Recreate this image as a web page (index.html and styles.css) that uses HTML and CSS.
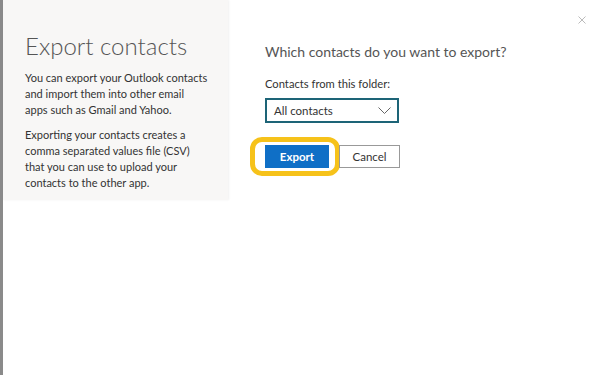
FILE: index.html
```html
<!DOCTYPE html>
<html lang="en">
<head>
  <meta charset="UTF-8" />
  <title>Export contacts</title>
  <link rel="stylesheet" href="styles.css">
</head>
<body>
  <div class="dialog">
    <!-- Info panel -->
    <aside class="side">
      <h1>Export contacts</h1>
      <p>You can export your Outlook contacts and import them into other email apps such as Gmail and Yahoo.</p>
      <p>Exporting your contacts creates a comma separated values file (CSV) that you can use to upload your contacts to the other app.</p>
    </aside>

    <!-- Form -->
    <main class="content">
      <h2>Which contacts do you want to export?</h2>
      <label class="field-label">Contacts from this folder:</label>
      <div class="select">
        <span>All contacts</span>
        <svg width="13" height="8" viewBox="0 0 13 8"><path d="M0.5 0.5 L6.5 6.5 L12.5 0.5" fill="none" stroke="#666" stroke-width="1"/></svg>
      </div>
      <div class="actions">
        <div class="highlight">
          <button class="btn primary">Export</button>
        </div>
        <button class="btn">Cancel</button>
      </div>
    </main>

    <button class="close" aria-label="Close">
      <svg width="8" height="8" viewBox="0 0 8 8"><path d="M0.5 0.5 L7.5 7.5 M7.5 0.5 L0.5 7.5" stroke="#bbb" stroke-width="1"/></svg>
    </button>
  </div>
</body>
</html>
```

FILE: styles.css
```css
* {
  box-sizing: border-box;
  margin: 0;
  padding: 0;
}
body {
  font-family: 'Lato', 'Open Sans', sans-serif;
  background: #fff;
  color: #333;
  width: 600px;
  height: 375px;
  overflow: hidden;
}
.dialog {
  position: relative;
  display: flex;
  align-items: flex-start;
  height: 375px;
  border-left: 3px solid #8a8a8a;
}
.side {
  width: 225px;
  height: 200px;
  background: #f8f7f6;
  padding: 32px 12px 0 22px;
  box-shadow: 1px 0 2px rgba(0,0,0,0.06);
}
.side h1 {
  font-size: 24px;
  font-weight: 300;
  color: #555;
  line-height: 28px;
  margin-bottom: 10px;
}
.side p {
  width: 183.7px;
  font-size: 11px;
  line-height: 16px;
  color: #333;
  margin-bottom: 9px;
}
.content {
  padding: 42px 0 0 37px;
}
.content h2 {
  font-size: 14px;
  font-weight: 400;
  color: #555;
  line-height: 20px;
  margin-bottom: 14px;
}
.field-label {
  display: block;
  font-size: 11.2px;
  color: #333;
  line-height: 16px;
  margin-bottom: 6px;
}
.select {
  display: flex;
  align-items: center;
  justify-content: space-between;
  width: 134px;
  height: 25px;
  border: 2px solid #1d6477;
  padding: 0 6px 0 7px;
  font-size: 11.5px;
  color: #333;
}
.actions {
  display: flex;
  align-items: center;
  margin-top: 14px;
  margin-left: -15px;
}
.highlight {
  border: 5px solid #f6c21a;
  border-radius: 12px;
  padding: 3px 6px 3px 10px;
  margin-right: -1px;
}
.btn {
  font-family: inherit;
  font-size: 11.5px;
  height: 23px;
  width: 61px;
  background: #fff;
  border: 1px solid #999;
  color: #333;
}
.btn.primary {
  width: 64px;
  background: #0f6fc6;
  border-color: #0f6fc6;
  color: #fff;
  font-weight: 700;
}
.close {
  position: absolute;
  top: 12px;
  right: 14px;
  background: none;
  border: none;
}
```
